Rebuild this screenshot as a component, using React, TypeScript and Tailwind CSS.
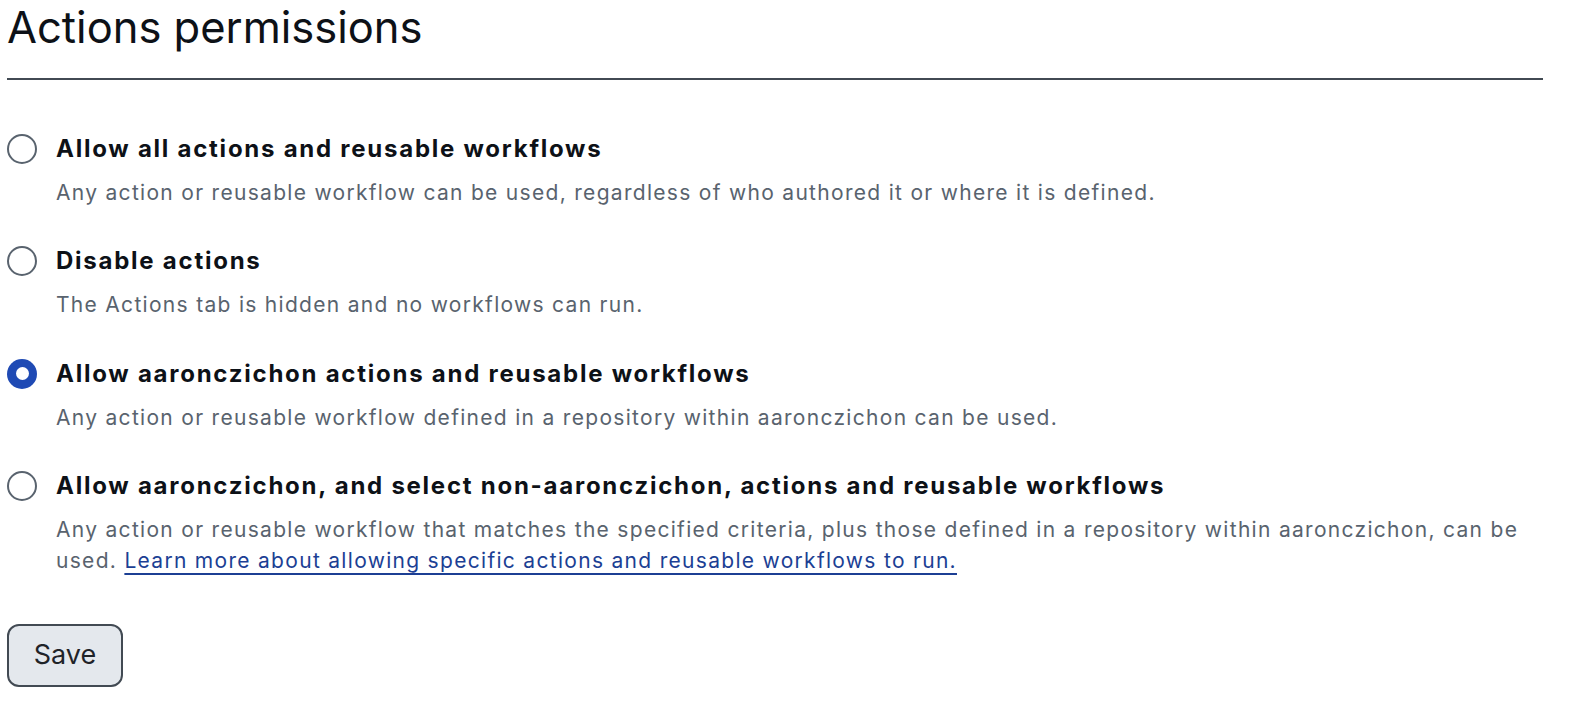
import { useState } from "react";

const options = [
  {
    id: "all",
    label: "Allow all actions and reusable workflows",
    desc: "Any action or reusable workflow can be used, regardless of who authored it or where it is defined.",
  },
  {
    id: "disable",
    label: "Disable actions",
    desc: "The Actions tab is hidden and no workflows can run.",
  },
  {
    id: "local",
    label: "Allow aaronczichon actions and reusable workflows",
    desc: "Any action or reusable workflow defined in a repository within aaronczichon can be used.",
  },
  {
    id: "selected",
    label: "Allow aaronczichon, and select non-aaronczichon, actions and reusable workflows",
    desc: "Any action or reusable workflow that matches the specified criteria, plus those defined in a repository within aaronczichon, can be used.",
    link: "Learn more about allowing specific actions and reusable workflows to run.",
  },
];

function Radio({ checked }: { checked: boolean }) {
  if (checked) {
    return (
      <span className="flex h-[30px] w-[30px] shrink-0 items-center justify-center rounded-full bg-[#1f4ab4]">
        <span className="h-[13px] w-[13px] rounded-full bg-white" />
      </span>
    );
  }
  return <span className="h-[30px] w-[30px] shrink-0 rounded-full border-2 border-[#59636e] bg-white" />;
}

export default function App() {
  const [value, setValue] = useState("local");

  return (
    <div className="min-h-screen bg-white pl-[7px] font-['Inter',sans-serif] text-[#1f2328]">
      <div className="w-[1536px]">
        <h2 className="text-[43.5px] leading-[55px] font-normal text-[#0d1117]">Actions permissions</h2>
        <div className="mt-[23px] h-[2px] bg-[#424a53]" />

        <div className="mt-[54px] flex flex-col gap-[38.3px]">
          {options.map((o) => (
            <div key={o.id} className="flex gap-[19px] cursor-pointer" onClick={() => setValue(o.id)}>
              <div className="flex h-[30px] items-center">
                <Radio checked={value === o.id} />
              </div>
              <div className="flex-1">
                <div className="text-[24px] leading-[30px] font-bold tracking-[1.75px] text-[#0d1117]">{o.label}</div>
                <p className="mt-[13px] text-[21px] leading-[31px] tracking-[1.3px] text-[#59636e]">
                  {o.desc}
                  {o.link && (
                    <>
                      {" "}
                      <a href="#" className="text-[#1c3f94] underline underline-offset-[5px] decoration-[1.5px]">
                        {o.link}
                      </a>
                    </>
                  )}
                </p>
              </div>
            </div>
          ))}
        </div>

        <button className="mt-[48px] h-[63px] w-[116px] rounded-[12px] border-2 border-[#424a53] bg-[#e4e8ed] text-[27px] text-[#1f2328]">
          Save
        </button>
      </div>
    </div>
  );
}
